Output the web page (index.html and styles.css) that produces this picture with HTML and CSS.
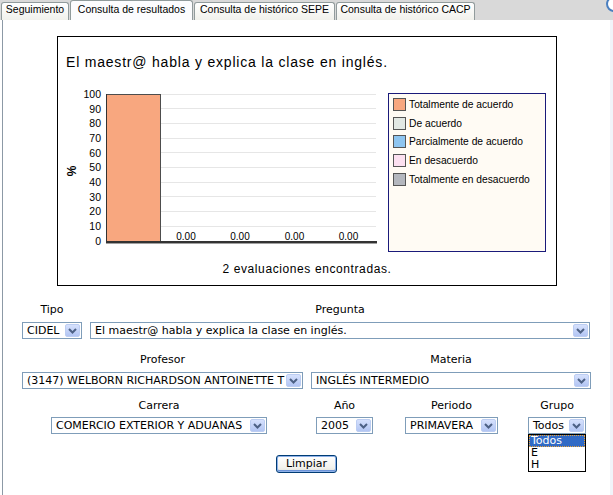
FILE: index.html
```html
<!DOCTYPE html>
<html lang="es">
<head>
<meta charset="utf-8">
<title>Consulta de resultados</title>
<link rel="stylesheet" href="styles.css">
</head>
<body>
<div class="tabs">
  <div class="tab t1">Seguimiento</div>
  <div class="tab t2 active">Consulta de resultados</div>
  <div class="tab t3">Consulta de histórico SEPE</div>
  <div class="tab t4">Consulta de histórico CACP</div>
  <span class="corner"></span>
</div>
<div class="content">
  <div class="chart">
    <div class="chart-title">El maestr@ habla y explica la clase en inglés.</div>
    <div class="chart-row">
      <svg class="plot" width="330" height="165" viewBox="0 0 330 165">
        <g class="grid">
          <line x1="48" x2="318" y1="7.5" y2="7.5"/>
          <line x1="48" x2="318" y1="21.5" y2="21.5"/>
          <line x1="48" x2="318" y1="36.5" y2="36.5"/>
          <line x1="48" x2="318" y1="51.5" y2="51.5"/>
          <line x1="48" x2="318" y1="65.5" y2="65.5"/>
          <line x1="48" x2="318" y1="80.5" y2="80.5"/>
          <line x1="48" x2="318" y1="95.5" y2="95.5"/>
          <line x1="48" x2="318" y1="109.5" y2="109.5"/>
          <line x1="48" x2="318" y1="124.5" y2="124.5"/>
          <line x1="48" x2="318" y1="139.5" y2="139.5"/>
        </g>
        <rect class="bar" x="48.5" y="7.5" width="54" height="147"/>
        <line class="axis" x1="48.5" y1="7" x2="48.5" y2="156"/>
        <rect class="axis-b" x="48" y="154" width="271" height="2"/>
        <rect class="axis-s" x="48" y="156" width="271" height="1"/>
        <g class="ylab">
          <text x="43" y="11">100</text>
          <text x="43" y="25.5">90</text>
          <text x="43" y="40">80</text>
          <text x="43" y="55">70</text>
          <text x="43" y="69.5">60</text>
          <text x="43" y="84">50</text>
          <text x="43" y="99">40</text>
          <text x="43" y="113.5">30</text>
          <text x="43" y="128">20</text>
          <text x="43" y="143">10</text>
          <text x="43" y="157.5">0</text>
        </g>
        <g class="vlab">
          <text x="128" y="153">0.00</text>
          <text x="182" y="153">0.00</text>
          <text x="236.5" y="153">0.00</text>
          <text x="290.5" y="153">0.00</text>
        </g>
        <text class="pct" transform="translate(18,84) rotate(-90)">%</text>
      </svg>
      <div class="legend">
        <div class="legend-item"><span class="sw c1"></span><span>Totalmente de acuerdo</span></div>
        <div class="legend-item"><span class="sw c2"></span><span>De acuerdo</span></div>
        <div class="legend-item"><span class="sw c3"></span><span>Parcialmente de acuerdo</span></div>
        <div class="legend-item"><span class="sw c4"></span><span>En desacuerdo</span></div>
        <div class="legend-item"><span class="sw c5"></span><span>Totalmente en desacuerdo</span></div>
      </div>
    </div>
    <div class="chart-foot">2 evaluaciones encontradas.</div>
  </div>

  <div class="form-row r1">
    <div class="field">
      <div class="label">Tipo</div>
      <div class="select w-tipo"><span class="val">CIDEL</span><span class="btn"><svg width="9" height="6" viewBox="0 0 9 6"><path d="M1 1 L4.5 4.5 L8 1"/></svg></span></div>
    </div>
    <div class="field">
      <div class="label">Pregunta</div>
      <div class="select w-preg"><span class="val">El maestr@ habla y explica la clase en inglés.</span><span class="btn"><svg width="9" height="6" viewBox="0 0 9 6"><path d="M1 1 L4.5 4.5 L8 1"/></svg></span></div>
    </div>
  </div>

  <div class="form-row r2">
    <div class="field">
      <div class="label">Profesor</div>
      <div class="select w-prof"><span class="val">(3147) WELBORN RICHARDSON ANTOINETTE T</span><span class="btn"><svg width="9" height="6" viewBox="0 0 9 6"><path d="M1 1 L4.5 4.5 L8 1"/></svg></span></div>
    </div>
    <div class="field">
      <div class="label">Materia</div>
      <div class="select w-mat"><span class="val">INGLÉS INTERMEDIO</span><span class="btn"><svg width="9" height="6" viewBox="0 0 9 6"><path d="M1 1 L4.5 4.5 L8 1"/></svg></span></div>
    </div>
  </div>

  <div class="form-row r3">
    <div class="field">
      <div class="label">Carrera</div>
      <div class="select w-car"><span class="val">COMERCIO EXTERIOR Y ADUANAS</span><span class="btn"><svg width="9" height="6" viewBox="0 0 9 6"><path d="M1 1 L4.5 4.5 L8 1"/></svg></span></div>
    </div>
    <div class="field f-ano">
      <div class="label">Año</div>
      <div class="select w-ano"><span class="val">2005</span><span class="btn"><svg width="9" height="6" viewBox="0 0 9 6"><path d="M1 1 L4.5 4.5 L8 1"/></svg></span></div>
    </div>
    <div class="field f-per">
      <div class="label">Periodo</div>
      <div class="select w-per"><span class="val">PRIMAVERA</span><span class="btn"><svg width="9" height="6" viewBox="0 0 9 6"><path d="M1 1 L4.5 4.5 L8 1"/></svg></span></div>
    </div>
    <div class="field f-gru">
      <div class="label">Grupo</div>
      <div class="select w-gru"><span class="val">Todos</span><span class="btn"><svg width="9" height="6" viewBox="0 0 9 6"><path d="M1 1 L4.5 4.5 L8 1"/></svg></span></div>
      <div class="dropdown">
        <div class="opt selected">Todos</div>
        <div class="opt">E</div>
        <div class="opt">H</div>
      </div>
    </div>
  </div>

  <div class="actions"><button class="xp-btn" type="button">Limpiar</button></div>
</div>
</body>
</html>
```

FILE: styles.css
```css
html, body {
  margin: 0;
  padding: 0;
}
body {
  width: 613px;
  height: 495px;
  overflow: hidden;
  background: #ffffff;
  font-family: "DejaVu Sans", Verdana, sans-serif;
  font-size: 11px;
  color: #000;
}

/* Tabs */
.tabs {
  position: relative;
  height: 20px;
  background: #d9d9d9;
  display: flex;
  align-items: flex-end;
  padding-left: 1px;
  gap: 1px;
  overflow: visible;
}
.tab {
  box-sizing: border-box;
  height: 18px;
  border: 1px solid #919b9c;
  border-bottom: 0;
  border-radius: 3px 3px 0 0;
  background: linear-gradient(#ffffff, #f1f1ec);
  font-family: "Liberation Sans", Arial, sans-serif;
  font-size: 10.5px;
  line-height: 13px;
  text-align: center;
  white-space: nowrap;
  color: #000;
}
.tab.active {
  height: 20px;
  line-height: 16px;
  background: #fcfcfe;
}
.t1 { width: 68px; }
.t2 { width: 123px; }
.t3 { width: 141px; }
.t4 { width: 139px; }
.corner {
  position: absolute;
  right: -9px;
  top: -4px;
  width: 12px;
  height: 12px;
  border: 2px solid #4a7fc0;
  border-radius: 50%;
  background: #ffffff;
}

/* Content */
.content {
  box-sizing: border-box;
  height: 475px;
  margin-left: 2px;
  border-left: 1px solid #8c99a6;
  border-right: 3px solid #f1f4f9;
  display: flex;
  flex-direction: column;
}

/* Chart */
.chart {
  box-sizing: border-box;
  width: 500px;
  height: 250px;
  margin: 16px 0 0 54px;
  border: 1px solid #000;
  display: flex;
  flex-direction: column;
  flex-shrink: 0;
}
.chart-title {
  padding: 16px 0 0 8px;
  height: 18px;
  line-height: 18px;
  margin-bottom: 16px;
  font-family: "Liberation Sans", Arial, sans-serif;
  font-size: 14px;
  letter-spacing: 0.8px;
  white-space: nowrap;
}
.chart-row {
  display: flex;
  height: 165px;
}
.plot {
  display: block;
  flex-shrink: 0;
}
.grid line {
  stroke: #e6e6e6;
  stroke-width: 1;
}
.bar {
  fill: #f8a77f;
  stroke: #4d4d4d;
  stroke-width: 1;
}
.axis {
  stroke: #333;
  stroke-width: 1;
}
.axis-b { fill: #333; }
.axis-s { fill: #a0a0a0; }
.ylab text {
  font-family: "Liberation Sans", Arial, sans-serif;
  font-size: 10.5px;
  text-anchor: end;
  fill: #000;
}
.vlab text {
  font-family: "Liberation Sans", Arial, sans-serif;
  font-size: 10px;
  text-anchor: middle;
  fill: #000;
}
.pct {
  font-family: "Liberation Sans", Arial, sans-serif;
  font-size: 12px;
  font-weight: bold;
  text-anchor: middle;
  fill: #000;
}
.legend {
  box-sizing: border-box;
  width: 158px;
  height: 159px;
  margin-top: 6px;
  border: 1px solid #1a1a7a;
  background: #fffbf4;
  padding: 4px 0 0 4px;
}
.legend-item {
  display: flex;
  align-items: flex-start;
  gap: 3px;
  height: 18.67px;
  font-family: "Liberation Sans", Arial, sans-serif;
  font-size: 10.25px;
  line-height: 13px;
  white-space: nowrap;
}
.sw {
  box-sizing: border-box;
  width: 13px;
  height: 13px;
  border: 1px solid #555;
  flex-shrink: 0;
}
.c1 { background: #f8a77f; }
.c2 { background: #e2e8e4; }
.c3 { background: #8ec5f0; }
.c4 { background: #fce0f0; }
.c5 { background: #b4b7be; }
.chart-foot {
  margin-top: 10px;
  line-height: 14px;
  text-align: center;
  font-family: "Liberation Sans", Arial, sans-serif;
  font-size: 12px;
  letter-spacing: 0.6px;
}

/* Form */
.form-row {
  display: flex;
  align-items: flex-end;
  flex-shrink: 0;
}
.r1 { margin-top: 17px; padding-left: 19px; gap: 8px; }
.r2 { margin-top: 14px; padding-left: 19px; gap: 8px; }
.r3 { margin-top: 10px; padding-left: 48px; }
.r3 .field { gap: 4px; }
.f-ano { margin-left: 49px; }
.f-per { margin-left: 32px; }
.f-gru { margin-left: 30px; }

.field {
  position: relative;
  display: flex;
  flex-direction: column;
  align-items: center;
  gap: 5px;
}
.label {
  line-height: 14px;
  white-space: nowrap;
}
.select {
  box-sizing: border-box;
  height: 17px;
  border: 1px solid #7f9db9;
  background: #fff;
  display: flex;
  align-items: center;
  padding: 1px;
}
.val {
  flex: 1;
  min-width: 0;
  padding-left: 3px;
  line-height: 13px;
  white-space: nowrap;
  overflow: hidden;
}
.btn {
  box-sizing: border-box;
  width: 15px;
  height: 13px;
  flex-shrink: 0;
  border: 1px solid #bccdf2;
  border-radius: 2px;
  background: linear-gradient(#d6e1fd, #b2c5f3);
  display: flex;
  align-items: center;
  justify-content: center;
}
.btn path {
  fill: none;
  stroke: #4d6185;
  stroke-width: 2;
}
.w-tipo { width: 60px; }
.w-preg { width: 500px; }
.w-prof { width: 281px; }
.w-mat { width: 280px; }
.w-car { width: 216px; }
.w-ano { width: 57px; }
.w-per { width: 93px; }
.w-gru { width: 58px; }

.dropdown {
  position: absolute;
  left: 0;
  top: 100%;
  box-sizing: border-box;
  width: 58px;
  height: 38px;
  border: 1px solid #000;
  background: #fff;
  z-index: 2;
}
.opt {
  box-sizing: border-box;
  height: 12px;
  line-height: 12px;
  padding-left: 2px;
  white-space: nowrap;
}
.opt.selected {
  background: #316ac5;
  color: #fff;
  border: 1px dotted #e8a33a;
  line-height: 10px;
  padding-left: 1px;
}

.actions {
  display: flex;
  justify-content: center;
  margin-top: 21px;
}
.xp-btn {
  box-sizing: border-box;
  width: 61px;
  height: 18px;
  padding: 0;
  border: 1px solid #003c74;
  border-radius: 3px;
  background: linear-gradient(#ffffff, #f3f3ee 70%, #e2e2da);
  box-shadow: inset 0 0 0 1px #8fb1e8, inset 0 -1px 0 1px #6c93d8;
  font-family: "DejaVu Sans", Verdana, sans-serif;
  font-size: 11px;
  line-height: 14px;
  color: #000;
}
```
